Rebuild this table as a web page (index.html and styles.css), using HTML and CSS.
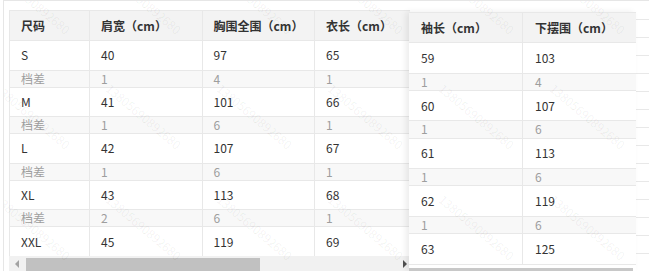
FILE: index.html
```html
<!DOCTYPE html>
<html lang="zh-CN">
<head>
    <meta charset="UTF-8">
    <meta name="viewport" content="width=device-width, initial-scale=1.0">
    <title>尺码表</title>
    <link rel="stylesheet" href="styles.css">
</head>
<body>
    <div class="frame">
        <div class="grid-wrap">
            <div class="scroll">
                <table class="size-table">
                    <colgroup>
                        <col class="c-size"><col class="c-w"><col class="c-w"><col class="c-w">
                    </colgroup>
                    <thead>
                        <tr><th>尺码</th><th>肩宽（cm）</th><th>胸围全围（cm）</th><th>衣长（cm）</th></tr>
                    </thead>
                    <tbody>
                        <tr class="main"><td>S</td><td>40</td><td>97</td><td>65</td></tr>
                        <tr class="diff"><td>档差</td><td>1</td><td>4</td><td>1</td></tr>
                        <tr class="main"><td>M</td><td>41</td><td>101</td><td>66</td></tr>
                        <tr class="diff"><td>档差</td><td>1</td><td>6</td><td>1</td></tr>
                        <tr class="main"><td>L</td><td>42</td><td>107</td><td>67</td></tr>
                        <tr class="diff"><td>档差</td><td>1</td><td>6</td><td>1</td></tr>
                        <tr class="main"><td>XL</td><td>43</td><td>113</td><td>68</td></tr>
                        <tr class="diff"><td>档差</td><td>2</td><td>6</td><td>1</td></tr>
                        <tr class="main"><td>XXL</td><td>45</td><td>119</td><td>69</td></tr>
                    </tbody>
                </table>
            </div>
            <div class="scrollbar">
                <span class="arrow arrow-left"></span>
                <span class="track"><span class="thumb"></span></span>
                <span class="arrow arrow-right"></span>
            </div>
        </div>

        <div class="edge-lines"></div>

        <!-- fixed right columns -->
        <div class="fixed-cols">
            <table class="size-table fixed-table">
                <thead>
                    <tr><th>袖长（cm）</th><th>下摆围（cm）</th></tr>
                </thead>
                <tbody>
                    <tr class="main"><td>59</td><td>103</td></tr>
                    <tr class="diff"><td>1</td><td>4</td></tr>
                    <tr class="main"><td>60</td><td>107</td></tr>
                    <tr class="diff"><td>1</td><td>6</td></tr>
                    <tr class="main"><td>61</td><td>113</td></tr>
                    <tr class="diff"><td>1</td><td>6</td></tr>
                    <tr class="main"><td>62</td><td>119</td></tr>
                    <tr class="diff"><td>1</td><td>6</td></tr>
                    <tr class="main"><td>63</td><td>125</td></tr>
                </tbody>
            </table>
            <div class="fixed-bar"></div>
        </div>

        <div class="watermark" id="watermark"></div>
    </div>

    <script>
        // Watermark grid
        const wm = document.getElementById('watermark');
        [0, 115, 226].forEach(y => {
            for (let x = 29; x < 700; x += 111) {
                const s = document.createElement('span');
                s.textContent = '13805690892680';
                s.style.left = x + 'px';
                s.style.top = y + 'px';
                wm.appendChild(s);
            }
        });
    </script>
</body>
</html>
```

FILE: styles.css
```css
/* Basic Reset */
* {
    margin: 0;
    padding: 0;
    box-sizing: border-box;
}

body {
    font-family: "Noto Sans CJK SC", "Noto Sans", sans-serif;
    font-size: 12px;
    color: #333;
    background-color: #fff;
    overflow: hidden;
}

/* Outer frame */
.frame {
    position: relative;
    height: 271px;
    margin-left: 3px;
    padding: 9px 0 0 5px;
    border-top: 1px solid #e6e6e6;
    border-left: 1px solid #e6e6e6;
    overflow: hidden;
}

.grid-wrap {
    width: 401px;
}

.scroll {
    height: 246px;
    overflow: hidden;
}

/* Table */
.size-table {
    border-collapse: collapse;
    table-layout: fixed;
    width: 418px;
}

.c-size {
    width: 80px;
}

.c-w {
    width: 112.5px;
}

.size-table th,
.size-table td {
    border: 1px solid #e8e8e8;
    padding: 0 11px;
    text-align: left;
    white-space: nowrap;
    line-height: 14px;
}

.size-table th {
    height: 30px;
    background-color: #f3f3f3;
    font-weight: 600;
    color: #333;
}

.size-table .main td {
    height: 29.6px;
    background-color: #fff;
}

.size-table .diff td {
    height: 17px;
    background-color: #f8f8f8;
    color: #9e9e9e;
}

/* Fake scrollbar */
.scrollbar {
    display: flex;
    align-items: flex-start;
    height: 15px;
    background-color: #f1f1f1;
}

.arrow {
    width: 17px;
    height: 15px;
    position: relative;
}

.arrow::after {
    content: "";
    position: absolute;
    top: 4px;
    border-top: 4px solid transparent;
    border-bottom: 4px solid transparent;
}

.arrow-left::after {
    left: 6px;
    border-right: 4px solid #a3a3a3;
}

.arrow-right::after {
    right: 3px;
    border-left: 4px solid #505050;
}

.track {
    flex: 1;
    padding-top: 2px;
}

.thumb {
    display: block;
    width: 234px;
    height: 13px;
    background-color: #c1c1c1;
}

/* Lines of the table behind, right edge */
.edge-lines {
    position: absolute;
    left: 632px;
    top: 0;
    width: 20px;
    height: 271px;
    background: repeating-linear-gradient(to bottom, transparent 0, transparent 17px, #e8e8e8 17px, #e8e8e8 18px);
    background-position: 0 1px;
}

/* Fixed right columns */
.fixed-cols {
    position: absolute;
    left: 405px;
    top: 11px;
    width: 227px;
    background-color: #fff;
    box-shadow: -3px 0 6px rgba(0, 0, 0, 0.08);
}

.fixed-table {
    width: 227px;
}

.fixed-table th,
.fixed-table td {
    padding: 0 12px;
    border-left: none;
}

.fixed-table th:last-child,
.fixed-table td:last-child {
    border-right: none;
}

.fixed-table .main td {
    height: 30.5px;
}

.fixed-table .diff td {
    height: 17.3px;
}

.fixed-bar {
    height: 3px;
    margin-top: 3px;
    margin-right: 3px;
    background-color: #c8c8c8;
}

/* Watermark */
.watermark {
    position: absolute;
    inset: 0;
    pointer-events: none;
}

.watermark span {
    position: absolute;
    font-size: 12px;
    color: rgba(0, 0, 0, 0.06);
    transform: translate(-50%, -50%) rotate(40deg);
    white-space: nowrap;
}
```
